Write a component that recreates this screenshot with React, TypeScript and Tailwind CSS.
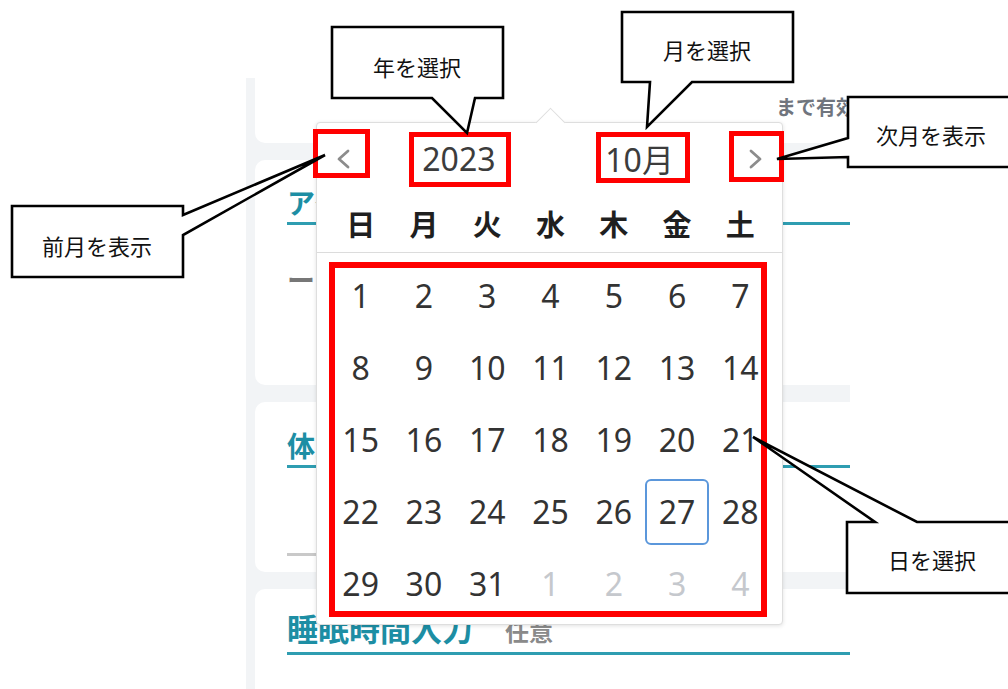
import React from 'react';

const JP = { fontFamily: '"Noto Sans CJK JP", "Noto Sans", sans-serif' };
const NUM = { fontFamily: '"Noto Sans", "Noto Sans CJK JP", sans-serif' };

const WEEK = ['日', '月', '火', '水', '木', '金', '土'];

type Day = { n: number; muted?: boolean; selected?: boolean };

const rows: Day[][] = [
  [1, 2, 3, 4, 5, 6, 7].map((n) => ({ n })),
  [8, 9, 10, 11, 12, 13, 14].map((n) => ({ n })),
  [15, 16, 17, 18, 19, 20, 21].map((n) => ({ n })),
  [22, 23, 24, 25, 26, 27, 28].map((n) => ({ n, selected: n === 27 })),
  [
    { n: 29 },
    { n: 30 },
    { n: 31 },
    { n: 1, muted: true },
    { n: 2, muted: true },
    { n: 3, muted: true },
    { n: 4, muted: true },
  ],
];

function Chevron({ dir }: { dir: 'left' | 'right' }) {
  return (
    <svg width="16" height="22" viewBox="0 0 16 22" fill="none">
      <polyline
        points={dir === 'left' ? '13,3 4,11 13,19' : '3,3 12,11 3,19'}
        stroke="#8c8c8c"
        strokeWidth="2.8"
        strokeLinecap="round"
        strokeLinejoin="round"
      />
    </svg>
  );
}

function DatePopup() {
  return (
    <div className="absolute left-[316px] top-[122px] w-[467px] bg-white border border-[#dedede] rounded-[4px] shadow-[0_1px_4px_rgba(0,0,0,0.12)]">
      {/* arrow */}
      <div className="absolute left-[223px] top-[-11px] w-[21px] h-[21px] rotate-45 bg-white border-l border-t border-[#dedede]" />

      <div className="relative flex items-center h-[72px]" style={NUM}>
        <div className="w-[52px] flex justify-center">
          <Chevron dir="left" />
        </div>
        <div className="w-[181px] text-center text-[32px] leading-none text-[#3c3c3c]">2023</div>
        <div className="w-[182px] text-center text-[32px] leading-none text-[#3c3c3c]">
          10<span style={JP}>月</span>
        </div>
        <div className="w-[52px] flex justify-center">
          <Chevron dir="right" />
        </div>
      </div>

      <div className="grid grid-cols-7 h-[58px] items-center pl-[12px] pr-[10px] border-b border-[#dcdcdc]" style={JP}>
        {WEEK.map((w) => (
          <div key={w} className="text-center text-[29px] font-bold text-[#1f1f1f] leading-none">
            {w}
          </div>
        ))}
      </div>

      <div className="grid grid-cols-7 gap-y-[6px] pl-[12px] pr-[10px] pt-[10px] pb-[7px]" style={NUM}>
        {rows.flat().map((d, i) => (
          <div
            key={i}
            className={
              'h-[66px] flex items-center justify-center text-[32px] leading-none ' +
              (d.muted ? 'text-[#c5c8cd] ' : 'text-[#333333] ') +
              (d.selected ? 'border-2 border-[#5b97db] rounded-[6px]' : '')
            }
          >
            {d.n}
          </div>
        ))}
      </div>
    </div>
  );
}

function Callouts() {
  const stroke = { fill: 'white', stroke: 'black', strokeWidth: 2.6, strokeLinejoin: 'miter' as const };
  const label = { fontFamily: '"Noto Sans CJK JP", sans-serif', fontSize: 22, fill: '#111' };
  return (
    <svg className="absolute inset-0 pointer-events-none" width="1008" height="689" viewBox="0 0 1008 689">
      <polygon {...stroke} points="332,27 503,27 503,98 475,98 467,133 432,98 332,98" />
      <text {...label} x="417" y="66" textAnchor="middle" dominantBaseline="central">年を選択</text>

      <polygon {...stroke} points="622,12 793,12 793,82 692,82 647,127 650,82 622,82" />
      <text {...label} x="707" y="49" textAnchor="middle" dominantBaseline="central">月を選択</text>

      <polygon {...stroke} points="848,97 1014,97 1014,167 848,167 848,157 777,159 848,138" />
      <text {...label} x="931" y="134" textAnchor="middle" dominantBaseline="central">次月を表示</text>

      <polygon {...stroke} points="12,206 183,206 183,215 325,155 183,235 183,277 12,277" />
      <text {...label} x="97" y="245" textAnchor="middle" dominantBaseline="central">前月を表示</text>

      <polygon {...stroke} points="847,522 875,522 753,437 917,522 1014,522 1014,593 847,593" />
      <text {...label} x="932" y="559" textAnchor="middle" dominantBaseline="central">日を選択</text>
    </svg>
  );
}

export default function App() {
  return (
    <div className="relative w-[1008px] h-[689px] overflow-hidden bg-white" style={JP}>
      <div className="ml-[246px] mt-[78px] w-[604px] h-[611px] overflow-hidden bg-[#f2f4f6] pl-[9px] flex flex-col gap-[17px]">
        <div className="shrink-0 w-[640px] h-[65px] bg-white rounded-b-[10px] pl-[521px] pt-[14px]">
          <span className="whitespace-nowrap text-[20px] leading-[30px] font-bold text-[#70757e]">まで有効</span>
        </div>

        <div className="shrink-0 w-[640px] h-[225px] bg-white rounded-[10px] pl-[32px] pt-[22px]">
          <div className="border-b-[3px] border-[#2f9db1] text-[28px] leading-[40px] font-bold text-[#1d8ea4]">
            アクティビティ
          </div>
          <div className="mt-[34px] text-[28px] leading-[40px] font-bold text-[#777]">ー</div>
        </div>

        <div className="shrink-0 w-[640px] h-[170px] bg-white rounded-[10px] pl-[32px] pt-[23px]">
          <div className="border-b-[3px] border-[#2f9db1] text-[28px] leading-[40px] font-bold text-[#1d8ea4]">
            体重入力
          </div>
          <div className="mt-[85px] w-[320px] h-[3px] bg-[#c9c9c9]" />
        </div>

        <div className="shrink-0 w-[640px] h-[200px] bg-white rounded-t-[10px] pl-[32px] pt-[19px]">
          <div className="flex items-baseline border-b-[3px] border-[#2f9db1] leading-[40px] pb-[1px]">
            <span className="text-[31px] font-bold text-[#1d8ea4]">睡眠時間入力</span>
            <span className="ml-[32px] text-[24px] font-bold text-[#8a8a8a]">任意</span>
          </div>
        </div>
      </div>

      <DatePopup />

      <div className="absolute left-[313px] top-[129px] w-[57px] h-[49px] border-[5px] border-[#ff0000]" />
      <div className="absolute left-[409px] top-[132px] w-[102px] h-[55px] border-[5px] border-[#ff0000]" />
      <div className="absolute left-[596px] top-[132px] w-[94px] h-[51px] border-[5px] border-[#ff0000]" />
      <div className="absolute left-[729px] top-[131px] w-[55px] h-[51px] border-[5px] border-[#ff0000]" />
      <div className="absolute left-[329px] top-[262px] w-[438px] h-[355px] border-[6px] border-[#ff0000]" />

      <Callouts />
    </div>
  );
}
